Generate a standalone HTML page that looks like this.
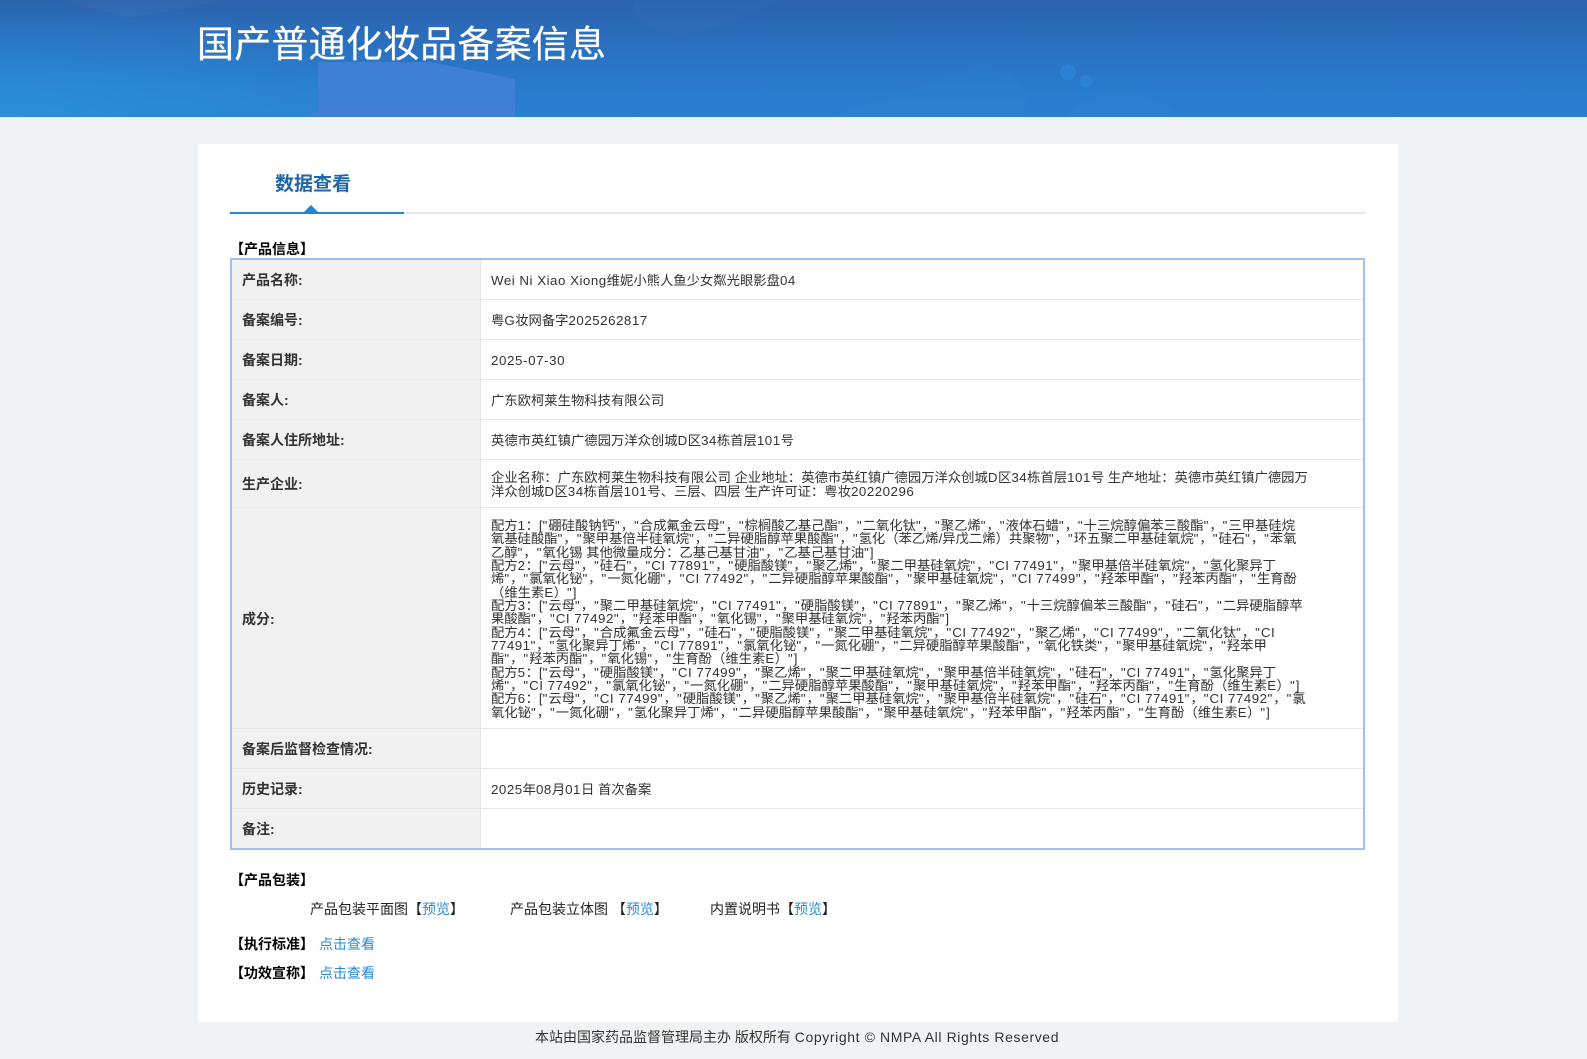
<!DOCTYPE html>
<html lang="zh-CN">
<head>
<meta charset="utf-8">
<title>国产普通化妆品备案信息</title>
<style>
*{box-sizing:border-box}
html,body{margin:0;padding:0}
body{width:1587px;height:1059px;overflow:hidden;position:relative;background:#eff3f6;font-family:"Liberation Sans","Noto Sans CJK SC",sans-serif;color:#333}
.hd{position:absolute;left:0;top:0;width:1587px;height:117px;background:radial-gradient(ellipse 480px 115px at 0 117px,rgba(43,146,216,.8),rgba(43,146,216,0)),linear-gradient(180deg,#2b63ae 0%,#2a7bcd 75%,#2a7fd0 100%);overflow:hidden}
.hd svg{position:absolute;left:0;top:0}
.hd h1{position:absolute;left:197px;top:16.5px;margin:0;font-size:37px;letter-spacing:.2px;line-height:48px;font-weight:400;color:#fff;white-space:nowrap;font-family:"Noto Sans CJK SC",sans-serif;text-shadow:0 0 .6px #fff}
.card{position:absolute;left:198px;top:144px;width:1200px;height:878px;background:#fff}
.tabline{position:absolute;left:32px;top:68px;width:1135px;height:2px;background:#e8e8e8}
.tabline i{position:absolute;left:0;top:0;width:174px;height:2px;background:#2285d8}
.tri{position:absolute;left:106px;top:61px;width:0;height:0;border-left:7px solid transparent;border-right:7px solid transparent;border-bottom:7px solid #2285d8}
.tab{position:absolute;left:77px;top:27px;font-size:19px;line-height:28px;font-weight:700;color:#1d66a8;white-space:nowrap}
.sec{position:absolute;font-size:14px;line-height:18px;font-weight:700;color:#000;white-space:nowrap}
table{position:absolute;left:32px;top:114px;width:1135px;height:591px;border:2px solid #9fc0ea;border-collapse:separate;border-spacing:0;table-layout:fixed}
td{padding:0;vertical-align:middle;border-bottom:1px solid #e6e6e6}
tr:last-child td{border-bottom:0}
td.l{width:249px;background:#f1f1f1;border-right:1px solid #e6e6e6;padding:1px 0 0 10px;font-size:14px;font-weight:700;color:#333;white-space:nowrap}
td.v{padding:2px 0 0 10px;font-size:13.33px;line-height:13.33px;color:#333;white-space:nowrap}
td.v b{font-weight:400;letter-spacing:.5px}
td.v i{font-style:normal;letter-spacing:1px}
.t{position:absolute;font-size:14px;line-height:18px;color:#222;white-space:nowrap}
a{color:#2a8ad8;text-decoration:none}
.ft{position:absolute;left:535px;top:1028px;font-size:14px;line-height:18px;color:#333;white-space:nowrap}
.ft b{font-weight:400;letter-spacing:.6px}
</style>
</head>
<body>
<div class="hd">
<svg width="1587" height="117" viewBox="0 0 1587 117">
<polygon points="60,0 230,0 130,18" fill="#ffffff" opacity=".03"/>
<polygon points="0,75 120,117 0,117" fill="#2d90d8" opacity=".2"/>
<polygon points="300,117 318,112 318,62 430,62 515,79 515,117" fill="#3f80d6"/>
<path d="M635,0 H780 L720,25 Q680,42 650,28 Q630,16 635,0Z" fill="#3a78c4" opacity=".15"/>
<path d="M830,117 L950,75 Q1015,60 1026,95 Q1030,105 1020,117Z" fill="#2f86d0" opacity=".3"/>
<path d="M1065,117 Q1090,90 1135,95 Q1170,100 1175,117Z" fill="#2f86d8" opacity=".3"/>
<ellipse cx="1068" cy="72" rx="8" ry="8" fill="#2f88dc" opacity=".6"/>
<ellipse cx="1086" cy="81" rx="6.5" ry="6" fill="#2f88dc" opacity=".6"/>
</svg>
<h1>国产普通化妆品备案信息</h1>
</div>

<div class="card">
<div class="tab">数据查看</div>
<div class="tabline"><i></i></div>
<div class="tri"></div>
<div class="sec" style="left:32px;top:96px">【产品信息】</div>
<table>
<tr style="height:40px"><td class="l">产品名称:</td><td class="v"><b>Wei Ni Xiao Xiong</b>维妮小熊人鱼少女粼光眼影盘<b>04</b></td></tr>
<tr style="height:40px"><td class="l">备案编号:</td><td class="v">粤<b>G</b>妆网备字<b>2025262817</b></td></tr>
<tr style="height:40px"><td class="l">备案日期:</td><td class="v"><b style="letter-spacing:.6px">2025-07-30</b></td></tr>
<tr style="height:40px"><td class="l">备案人:</td><td class="v">广东欧柯莱生物科技有限公司</td></tr>
<tr style="height:40px"><td class="l">备案人住所地址:</td><td class="v">英德市英红镇广德园万洋众创城<b>D</b>区<b>34</b>栋首层<b>101</b>号</td></tr>
<tr style="height:48px"><td class="l">生产企业:</td><td class="v">企业名称：广东欧柯莱生物科技有限公司 企业地址：英德市英红镇广德园万洋众创城<b>D</b>区<b>34</b>栋首层<b>101</b>号 生产地址：英德市英红镇广德园万<br>洋众创城<b>D</b>区<b>34</b>栋首层<b>101</b>号、三层、四层 生产许可证：粤妆<b>20220296</b></td></tr>
<tr style="height:221px"><td class="l">成分:</td><td class="v">配方<b>1</b>：[<i>"</i>硼硅酸钠钙<i>"</i>，<i>"</i>合成氟金云母<i>"</i>，<i>"</i>棕榈酸乙基己酯<i>"</i>，<i>"</i>二氧化钛<i>"</i>，<i>"</i>聚乙烯<i>"</i>，<i>"</i>液体石蜡<i>"</i>，<i>"</i>十三烷醇偏苯三酸酯<i>"</i>，<i>"</i>三甲基硅烷<br>氧基硅酸酯<i>"</i>，<i>"</i>聚甲基倍半硅氧烷<i>"</i>，<i>"</i>二异硬脂醇苹果酸酯<i>"</i>，<i>"</i>氢化（苯乙烯/异戊二烯）共聚物<i>"</i>，<i>"</i>环五聚二甲基硅氧烷<i>"</i>，<i>"</i>硅石<i>"</i>，<i>"</i>苯氧<br>乙醇<i>"</i>，<i>"</i>氧化锡 其他微量成分：乙基己基甘油<i>"</i>，<i>"</i>乙基己基甘油<i>"</i>]<br>配方<b>2</b>：[<i>"</i>云母<i>"</i>，<i>"</i>硅石<i>"</i>，<i>"</i><b>CI 77891</b><i>"</i>，<i>"</i>硬脂酸镁<i>"</i>，<i>"</i>聚乙烯<i>"</i>，<i>"</i>聚二甲基硅氧烷<i>"</i>，<i>"</i><b>CI 77491</b><i>"</i>，<i>"</i>聚甲基倍半硅氧烷<i>"</i>，<i>"</i>氢化聚异丁<br>烯<i>"</i>，<i>"</i>氯氧化铋<i>"</i>，<i>"</i>一氮化硼<i>"</i>，<i>"</i><b>CI 77492</b><i>"</i>，<i>"</i>二异硬脂醇苹果酸酯<i>"</i>，<i>"</i>聚甲基硅氧烷<i>"</i>，<i>"</i><b>CI 77499</b><i>"</i>，<i>"</i>羟苯甲酯<i>"</i>，<i>"</i>羟苯丙酯<i>"</i>，<i>"</i>生育酚<br>（维生素<b>E</b>）<i>"</i>]<br>配方<b>3</b>：[<i>"</i>云母<i>"</i>，<i>"</i>聚二甲基硅氧烷<i>"</i>，<i>"</i><b>CI 77491</b><i>"</i>，<i>"</i>硬脂酸镁<i>"</i>，<i>"</i><b>CI 77891</b><i>"</i>，<i>"</i>聚乙烯<i>"</i>，<i>"</i>十三烷醇偏苯三酸酯<i>"</i>，<i>"</i>硅石<i>"</i>，<i>"</i>二异硬脂醇苹<br>果酸酯<i>"</i>，<i>"</i><b>CI 77492</b><i>"</i>，<i>"</i>羟苯甲酯<i>"</i>，<i>"</i>氧化锡<i>"</i>，<i>"</i>聚甲基硅氧烷<i>"</i>，<i>"</i>羟苯丙酯<i>"</i>]<br>配方<b>4</b>：[<i>"</i>云母<i>"</i>，<i>"</i>合成氟金云母<i>"</i>，<i>"</i>硅石<i>"</i>，<i>"</i>硬脂酸镁<i>"</i>，<i>"</i>聚二甲基硅氧烷<i>"</i>，<i>"</i><b>CI 77492</b><i>"</i>，<i>"</i>聚乙烯<i>"</i>，<i>"</i><b>CI 77499</b><i>"</i>，<i>"</i>二氧化钛<i>"</i>，<i>"</i><b>CI</b><br><b>77491</b><i>"</i>，<i>"</i>氢化聚异丁烯<i>"</i>，<i>"</i><b>CI 77891</b><i>"</i>，<i>"</i>氯氧化铋<i>"</i>，<i>"</i>一氮化硼<i>"</i>，<i>"</i>二异硬脂醇苹果酸酯<i>"</i>，<i>"</i>氧化铁类<i>"</i>，<i>"</i>聚甲基硅氧烷<i>"</i>，<i>"</i>羟苯甲<br>酯<i>"</i>，<i>"</i>羟苯丙酯<i>"</i>，<i>"</i>氧化锡<i>"</i>，<i>"</i>生育酚（维生素<b>E</b>）<i>"</i>]<br>配方<b>5</b>：[<i>"</i>云母<i>"</i>，<i>"</i>硬脂酸镁<i>"</i>，<i>"</i><b>CI 77499</b><i>"</i>，<i>"</i>聚乙烯<i>"</i>，<i>"</i>聚二甲基硅氧烷<i>"</i>，<i>"</i>聚甲基倍半硅氧烷<i>"</i>，<i>"</i>硅石<i>"</i>，<i>"</i><b>CI 77491</b><i>"</i>，<i>"</i>氢化聚异丁<br>烯<i>"</i>，<i>"</i><b>CI 77492</b><i>"</i>，<i>"</i>氯氧化铋<i>"</i>，<i>"</i>一氮化硼<i>"</i>，<i>"</i>二异硬脂醇苹果酸酯<i>"</i>，<i>"</i>聚甲基硅氧烷<i>"</i>，<i>"</i>羟苯甲酯<i>"</i>，<i>"</i>羟苯丙酯<i>"</i>，<i>"</i>生育酚（维生素<b>E</b>）<i>"</i>]<br>配方<b>6</b>：[<i>"</i>云母<i>"</i>，<i>"</i><b>CI 77499</b><i>"</i>，<i>"</i>硬脂酸镁<i>"</i>，<i>"</i>聚乙烯<i>"</i>，<i>"</i>聚二甲基硅氧烷<i>"</i>，<i>"</i>聚甲基倍半硅氧烷<i>"</i>，<i>"</i>硅石<i>"</i>，<i>"</i><b>CI 77491</b><i>"</i>，<i>"</i><b>CI 77492</b><i>"</i>，<i>"</i>氯<br>氧化铋<i>"</i>，<i>"</i>一氮化硼<i>"</i>，<i>"</i>氢化聚异丁烯<i>"</i>，<i>"</i>二异硬脂醇苹果酸酯<i>"</i>，<i>"</i>聚甲基硅氧烷<i>"</i>，<i>"</i>羟苯甲酯<i>"</i>，<i>"</i>羟苯丙酯<i>"</i>，<i>"</i>生育酚（维生素<b>E</b>）<i>"</i>]</td></tr>
<tr style="height:40px"><td class="l">备案后监督检查情况:</td><td class="v"></td></tr>
<tr style="height:40px"><td class="l">历史记录:</td><td class="v"><b>2025</b>年<b>08</b>月<b>01</b>日 首次备案</td></tr>
<tr style="height:39px"><td class="l">备注:</td><td class="v"></td></tr>
</table>
<div class="sec" style="left:32px;top:727px">【产品包装】</div>
<div class="t" style="left:112px;top:756px">产品包装平面图【<a>预览</a>】</div>
<div class="t" style="left:312px;top:756px">产品包装立体图 【<a>预览</a>】</div>
<div class="t" style="left:512px;top:756px">内置说明书【<a>预览</a>】</div>
<div class="sec" style="left:32px;top:791px">【执行标准】</div>
<div class="t" style="left:121px;top:791px"><a>点击查看</a></div>
<div class="sec" style="left:32px;top:820px">【功效宣称】</div>
<div class="t" style="left:121px;top:820px"><a>点击查看</a></div>
</div>
<div class="ft">本站由国家药品监督管理局主办 版权所有 <b>Copyright © NMPA All Rights Reserved</b></div>
</body>
</html>
